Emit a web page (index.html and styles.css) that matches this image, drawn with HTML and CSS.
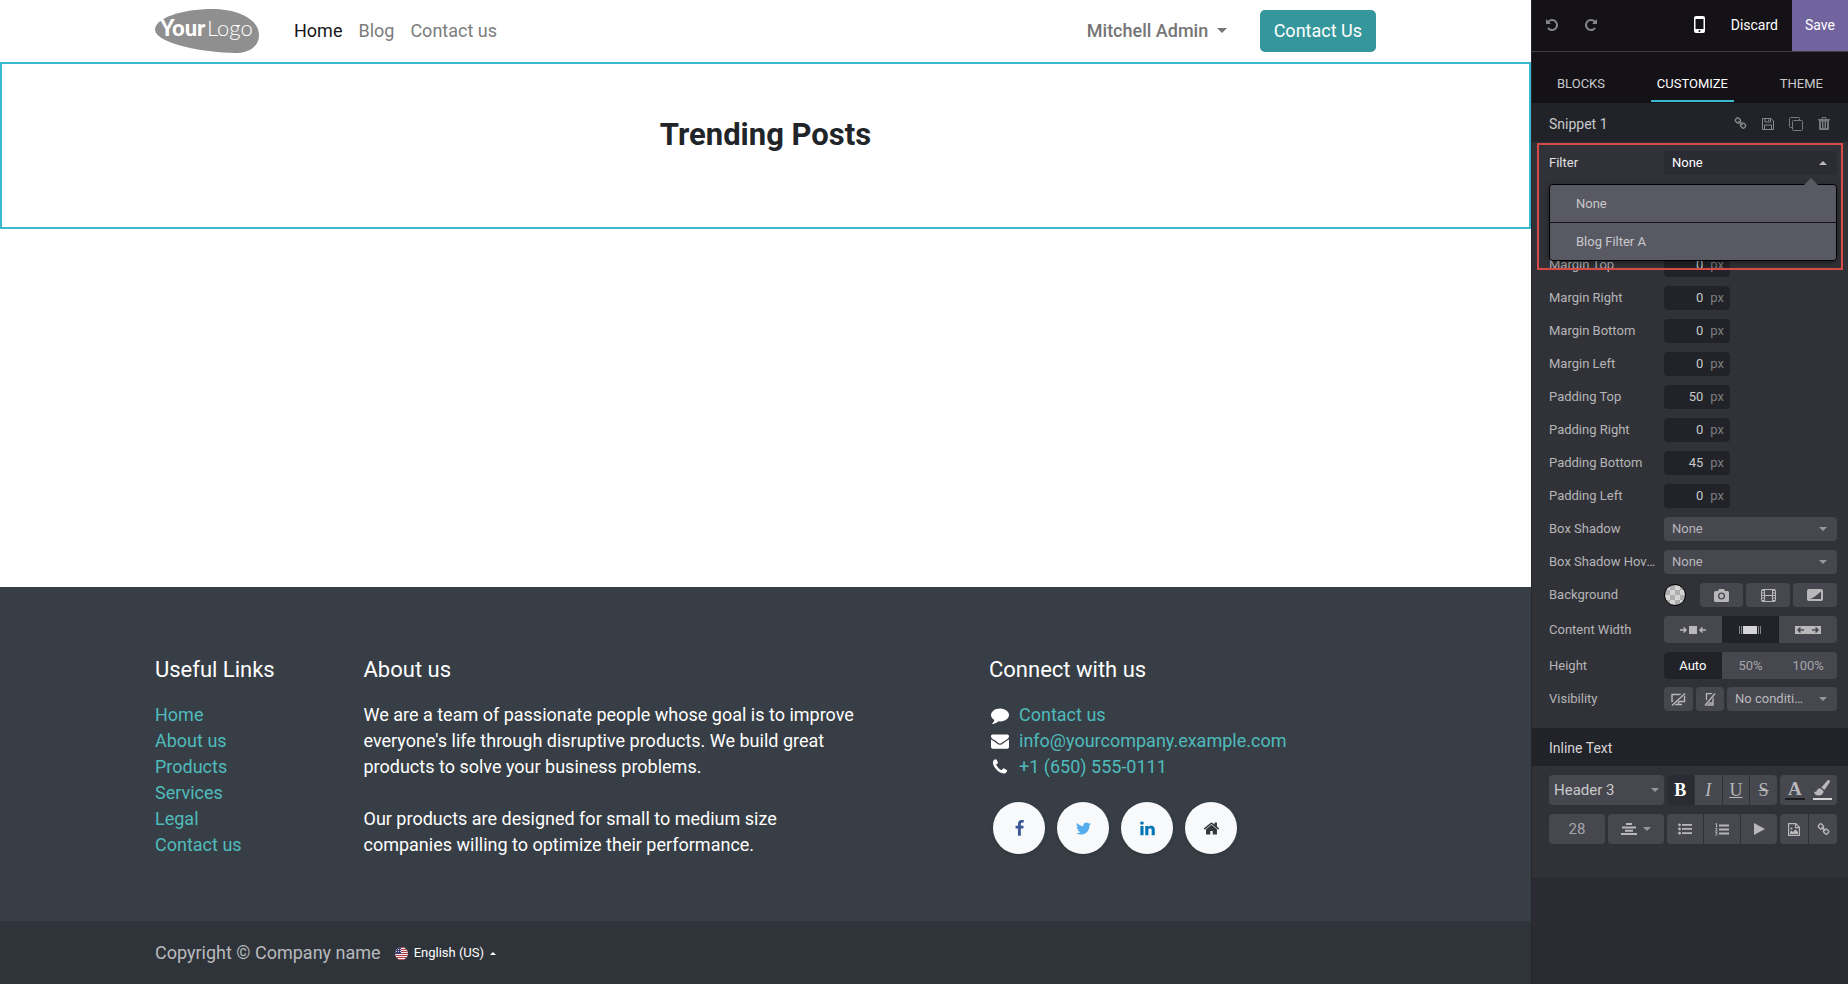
FILE: index.html
```html
<!DOCTYPE html>
<html lang="en">
<head>
<meta charset="utf-8">
<title>Home | Website Editor</title>
<link rel="stylesheet" href="styles.css">
</head>
<body>
<svg class="defs" aria-hidden="true">
  <symbol id="i-undo" viewBox="0 0 1792 1792"><path d="M1664 896q0 156-61 298t-164 245-245 164-298 61q-172 0-327-72.500t-264-204.500q-7-10-6.500-22.500t8.500-20.500l137-138q10-9 25-9 16 2 23 12 73 95 179 147t225 52q104 0 198.500-40.500t163.500-109.500 109.500-163.500 40.500-198.500-40.500-198.500-109.500-163.500-163.500-109.500-198.500-40.500q-98 0-188 35.500t-160 101.500l137 138q31 30 14 69-17 40-59 40h-448q-26 0-45-19t-19-45v-448q0-42 40-59 39-17 69 14l130 129q107-101 244.500-156.500t284.500-55.500q156 0 298 61t245 164 164 245 61 298z"/></symbol>
  <symbol id="i-link" viewBox="0 0 1792 1792"><path d="M1520 1216q0-40-28-68l-208-208q-28-28-68-28-42 0-72 32 3 3 19 18.500t21.500 21.500 15 19 13 25.500 3.500 27.500q0 40-28 68t-68 28q-15 0-27.500-3.500t-25.500-13-19-15-21.500-21.500-18.500-19q-33 31-33 73 0 40 28 68l206 207q27 27 68 27 40 0 68-26l147-146q28-28 28-67zm-703-705q0-40-28-68l-206-207q-28-28-68-28-39 0-68 27l-147 146q-28 28-28 67 0 40 28 68l208 208q27 27 68 27 42 0 72-31-3-3-19-18.500t-21.500-21.500-15-19-13-25.500-3.500-27.500q0-40 28-68t68-28q15 0 27.500 3.500t25.500 13 19 15 21.500 21.500 18.500 19q33-31 33-73zm895 705q0 120-85 203l-147 146q-83 83-203 83-121 0-204-85l-206-207q-83-83-83-203 0-123 88-209l-88-88q-86 88-208 88-120 0-204-84l-208-208q-84-84-84-204t85-203l147-146q83-83 203-83 121 0 204 85l206 207q83 83 83 203 0 123-88 209l88 88q86-88 208-88 120 0 204 84l208 208q84 84 84 204z"/></symbol>
  <symbol id="i-facebook" viewBox="0 0 1792 1792"><path d="M1343 12v264h-157q-86 0-116 36t-30 108v189h293l-39 296h-254v759h-306v-759h-255v-296h255v-218q0-186 104-288.500t277-102.500q147 0 228 12z"/></symbol>
  <symbol id="i-twitter" viewBox="0 0 1792 1792"><path d="M1684 408q-67 98-162 167 1 14 1 42 0 130-38 259.500t-115.500 248.500-184.500 210.500-258 146-323 54.500q-271 0-496-145 35 4 78 4 225 0 401-138-105-2-188-64.500t-114-159.500q33 5 61 5 43 0 85-11-112-23-185.500-111.500t-73.500-205.500v-4q68 38 146 41-66-44-105-115t-39-154q0-88 44-163 121 149 294.500 238.500t371.500 99.500q-8-38-8-74 0-134 94.500-228.500t228.500-94.500q140 0 236 102 109-21 205-78-37 115-142 178 93-10 186-50z"/></symbol>
  <symbol id="i-linkedin" viewBox="0 0 1792 1792"><path d="M477 625v991h-330v-991h330zm21-306q1 73-50.500 122t-135.500 49h-2q-82 0-132-49t-50-122q0-74 51.500-122.500t134.500-48.500 133 48.500 51 122.500zm1166 729v568h-329v-530q0-105-40.500-164.500t-126.500-59.500q-63 0-105.500 34.500t-63.500 85.500q-11 30-11 81v553h-329q2-399 2-647t-1-296l-1-48h329v144h-2q20-32 41-56t56.500-52 87-43.500 114.500-15.500q171 0 275 113.500t104 332.500z"/></symbol>
  <symbol id="i-home" viewBox="0 0 1792 1792"><path d="M1472 992v480q0 26-19 45t-45 19h-384v-384h-256v384h-384q-26 0-45-19t-19-45v-480q0-1 .5-3t.5-3l575-474 575 474q1 2 1 6zm223-69l-62 74q-8 9-21 11h-3q-13 0-21-7l-692-577-692 577q-12 8-24 7-13-2-21-11l-62-74q-8-10-7-23.500t11-21.500l719-599q32-26 76-26t76 26l244 204v-195q0-14 9-23t23-9h192q14 0 23 9t9 23v408l219 182q10 8 11 21.500t-7 23.500z"/></symbol>
  <symbol id="i-comment" viewBox="0 0 1792 1792"><path d="M1792 896q0 174-120 321.500t-326 233-450 85.500q-70 0-145-8-198 175-460 242-49 14-114 22-17 2-30.500-9t-17.500-29v-1q-3-4-.5-12t2-10 4.500-9.500l6-9 7-8.500 8-9q7-8 31-34.500t34.500-38 31-39.500 32.500-51 27-59 26-76q-157-89-247.500-220t-90.500-281q0-130 71-248.500t191-204.500 286-136.500 348-50.500q244 0 450 85.500t326 233 120 321.500z"/></symbol>
  <symbol id="i-envelope" viewBox="0 0 1792 1792"><path d="M1792 710v794q0 66-47 113t-113 47h-1472q-66 0-113-47t-47-113v-794q44 49 101 87 362 246 497 345 57 42 92.500 65.500t94.500 48 110 24.500h2q51 0 110-24.500t94.500-48 92.500-65.500q170-123 498-345 57-39 100-87zm0-294q0 79-49 151t-122 123q-376 261-468 325-10 7-42.500 31t-54 38.500-52 32.500-57.500 27-50 9h-2q-23 0-50-9t-57.500-27-52-32.500-54-38.500-42.500-31q-91-64-262-182.500t-205-142.500q-62-42-117-115.500t-55-136.500q0-78 41.500-130t118.500-52h1472q65 0 112.500 47t47.500 113z"/></symbol>
  <symbol id="i-phone" viewBox="0 0 1792 1792"><path d="M1600 1240q0 27-10 70.500t-21 68.500q-21 50-122 106-94 51-186 51-27 0-53-3.500t-57.500-12.500-47-14.500-55.500-20.500-49-18q-98-35-175-83-127-79-264-216t-216-264q-48-77-83-175-3-9-18-49t-20.500-55.500-14.500-47-12.500-57.500-3.500-53q0-92 51-186 56-101 106-122 25-11 68.500-21t70.500-10q14 0 21 3 18 6 53 76 11 19 30 54t35 63.500 31 53.500q3 4 17.500 25t21.500 35.500 7 28.500q0 20-28.500 50t-62 55-62 53-28.500 46q0 9 5 22.500t8.500 20.500 14 24 11.500 19q76 137 174 235t235 174q2 1 19 11.500t24 14 20.500 8.500 22.500 5q18 0 46-28.500t53-62 55-62 50-28.500q14 0 28.500 7t35.500 21.500 25 17.500q25 15 53.500 31t63.500 35 54 30q70 35 76 53 3 7 3 21z"/></symbol>
</svg>

<div class="editor">
  <div class="site">
    <header class="site-header">
      <div class="container header-bar">
        <a class="logo" href="#" aria-label="YourLogo">
          <svg width="105" height="45" viewBox="0 0 105 45">
            <path fill="#8f8f8f" d="M0 20C1 9 27 0 57 0c27 0 47 11 47 26 0 11-9 18-24 18C52 44-1 35 0 20z"/>
            <text x="5" y="27" class="logo-bold">Your</text>
            <text x="52" y="27" class="logo-light">Logo</text>
          </svg>
        </a>
        <nav class="nav">
          <a class="active" href="#">Home</a>
          <a href="#">Blog</a>
          <a href="#">Contact us</a>
        </nav>
        <button class="user" type="button">Mitchell Admin <span class="caret caret-nav"></span></button>
        <a class="cta" href="#">Contact Us</a>
      </div>
    </header>

    <main class="site-main">
      <section class="snippet"><h3>Trending Posts</h3></section>
    </main>

    <footer class="site-footer">
      <div class="container footer-grid">
        <div>
          <h5>Useful Links</h5>
          <ul>
            <li><a href="#">Home</a></li>
            <li><a href="#">About us</a></li>
            <li><a href="#">Products</a></li>
            <li><a href="#">Services</a></li>
            <li><a href="#">Legal</a></li>
            <li><a href="#">Contact us</a></li>
          </ul>
        </div>
        <div class="about">
          <h5>About us</h5>
          <p>We are a team of passionate people whose goal is to improve everyone's life through disruptive products. We build great products to solve your business problems.</p>
          <p>Our products are designed for small to medium size companies willing to optimize their performance.</p>
        </div>
        <div class="connect">
          <h5>Connect with us</h5>
          <ul>
            <li><svg class="fa"><use href="#i-comment"/></svg><a href="#">Contact us</a></li>
            <li><svg class="fa"><use href="#i-envelope"/></svg><a href="#">info@yourcompany.example.com</a></li>
            <li><svg class="fa"><use href="#i-phone"/></svg><a href="#">+1 (650) 555-0111</a></li>
          </ul>
          <div class="social">
            <a class="facebook" href="#" aria-label="Facebook"><svg><use href="#i-facebook"/></svg></a>
            <a class="twitter" href="#" aria-label="Twitter"><svg><use href="#i-twitter"/></svg></a>
            <a class="linkedin" href="#" aria-label="LinkedIn"><svg><use href="#i-linkedin"/></svg></a>
            <a class="homepage" href="#" aria-label="Home"><svg><use href="#i-home"/></svg></a>
          </div>
        </div>
      </div>
    </footer>
    <div class="copyright">
      <div class="container copyright-bar">
        <span>Copyright © Company name</span>
        <button class="language" type="button">
          <svg width="13" height="13" viewBox="0 0 13 13">
            <defs><clipPath id="round"><circle cx="6.500" cy="6.500" r="6.500"/></clipPath></defs>
            <g clip-path="url(#round)">
              <rect width="13" height="13" fill="#f3eeee"/>
              <path stroke="#b23a44" d="M0 .5h13M0 2.500h13M0 4.500h13M0 6.500h13M0 8.500h13M0 10.500h13M0 12.500h13"/>
              <rect width="6" height="7" fill="#39406f"/>
              <path stroke="#c9cce0" stroke-dasharray="1 1" d="M1 2.500h5M1 4.500h5"/>
            </g>
          </svg>
          English (US) <span class="caret caret-lang"></span>
        </button>
      </div>
    </div>
  </div>

  <aside class="sidebar">
    <div class="topbar">
      <button class="icon-btn dim" type="button" aria-label="Undo"><svg width="14" height="14"><use href="#i-undo"/></svg></button>
      <button class="icon-btn dim redo" type="button" aria-label="Redo"><svg width="14" height="14" viewBox="0 0 14 14"><g transform="matrix(-1 0 0 1 14 0)"><use href="#i-undo" width="14" height="14"/></g></svg></button>
      <button class="icon-btn mobile" type="button" aria-label="Mobile preview"><svg width="11" height="17" viewBox="0 0 11 17"><path fill="#fff" fill-rule="evenodd" d="M2 0h7a2 2 0 0 1 2 2v13a2 2 0 0 1-2 2H2a2 2 0 0 1-2-2V2a2 2 0 0 1 2-2zm-.5 3v10h8V3zm4 11a1 1 0 1 0 0 2 1 1 0 0 0 0-2z"/></svg></button>
      <button class="discard" type="button">Discard</button>
      <button class="save" type="button">Save</button>
    </div>
    <div class="tabs">
      <button type="button">BLOCKS</button>
      <button class="active" type="button">CUSTOMIZE</button>
      <button type="button">THEME</button>
    </div>

    <div class="panel-title">
      <span>Snippet 1</span>
      <div class="panel-actions">
        <button type="button" aria-label="Copy link"><svg width="13" height="13"><use href="#i-link"/></svg></button>
        <button type="button" aria-label="Save block"><svg width="12" height="12" viewBox="0 0 12 12" fill="none" stroke="#88898c"><path d="M.5.5h8.500l2.500 2.500v8.500H.5zM3 .5v3.500h5.500V.5M2.500 11.500V7h7v4.500M6.500 1.500v1.500"/></svg></button>
        <button type="button" aria-label="Duplicate"><svg width="14" height="14" viewBox="0 0 14 14" fill="none" stroke="#77787b"><path d="M4.500 3.500h8a1 1 0 0 1 1 1v8a1 1 0 0 1-1 1h-8a1 1 0 0 1-1-1v-8a1 1 0 0 1 1-1zM10.500 3V1.500a1 1 0 0 0-1-1h-8a1 1 0 0 0-1 1v8a1 1 0 0 0 1 1H3"/></svg></button>
        <button type="button" aria-label="Remove"><svg width="12" height="13" viewBox="0 0 12 13"><path fill="#77787b" fill-rule="evenodd" d="M4 0h4l.8 2H12v1.200h-1V12a1 1 0 0 1-1 1H2a1 1 0 0 1-1-1V3.200H0V2h3.200zm.5 1l-.3 1h3.600l-.3-1zM3 4.500V11h1V4.500zm2.500 0V11h1V4.500zM8 4.500V11h1V4.500z"/></svg></button>
      </div>
    </div>

    <div class="options">
      <div class="filter">
        <div class="row">
          <span class="label" id="filter-label">Filter</span>
          <button class="toggle" type="button" aria-expanded="true" aria-labelledby="filter-label">None<span class="caret caret-up"></span></button>
        </div>
        <div class="menu">
          <button type="button">None</button>
          <button type="button">Blog Filter A</button>
        </div>
        <div class="highlight"></div>
      </div>

      <div class="row"><label for="mt">Margin Top</label><div class="num"><input id="mt" type="text" value="0"><span>px</span></div></div>
      <div class="row"><label for="mr">Margin Right</label><div class="num"><input id="mr" type="text" value="0"><span>px</span></div></div>
      <div class="row"><label for="mb">Margin Bottom</label><div class="num"><input id="mb" type="text" value="0"><span>px</span></div></div>
      <div class="row"><label for="ml">Margin Left</label><div class="num"><input id="ml" type="text" value="0"><span>px</span></div></div>
      <div class="row"><label for="pt">Padding Top</label><div class="num"><input id="pt" type="text" value="50"><span>px</span></div></div>
      <div class="row"><label for="pr">Padding Right</label><div class="num"><input id="pr" type="text" value="0"><span>px</span></div></div>
      <div class="row"><label for="pb">Padding Bottom</label><div class="num"><input id="pb" type="text" value="45"><span>px</span></div></div>
      <div class="row"><label for="pl">Padding Left</label><div class="num"><input id="pl" type="text" value="0"><span>px</span></div></div>
      <div class="row"><label for="bs">Box Shadow</label><div class="select"><select id="bs"><option>None</option></select><span class="caret"></span></div></div>
      <div class="row"><label for="bsh">Box Shadow Hover</label><div class="select"><select id="bsh"><option>None</option></select><span class="caret"></span></div></div>

      <div class="row">
        <span class="label">Background</span>
        <div class="background">
          <button class="swatch" type="button" aria-label="Background colour"></button>
          <button class="btn" type="button" aria-label="Image"><svg width="15" height="13" viewBox="0 0 15 13"><path fill="#b8b8bb" fill-rule="evenodd" d="M5 0h5l1 2h2.500A1.500 1.500 0 0 1 15 3.500v8a1.500 1.500 0 0 1-1.500 1.500h-12A1.500 1.500 0 0 1 0 11.500v-8A1.500 1.500 0 0 1 1.500 2H4zm2.500 3.500a3.500 3.500 0 1 0 0 7 3.500 3.500 0 0 0 0-7zm0 1.300a2.200 2.200 0 1 1 0 4.400 2.200 2.200 0 0 1 0-4.400z"/></svg></button>
          <button class="btn" type="button" aria-label="Video"><svg width="15" height="13" viewBox="0 0 15 13" fill="none" stroke="#b8b8bb"><rect x=".5" y=".5" width="14" height="12" rx="1"/><path d="M3.500 0v13M11.500 0v13M4 6.500h7"/><path d="M2 1v11M13 1v11" stroke-width="2" stroke-dasharray="1 1.500"/></svg></button>
          <button class="btn" type="button" aria-label="Shape"><svg width="16" height="12" viewBox="0 0 16 12"><rect width="16" height="12" rx="2" fill="#b8b8bb"/><path fill="#474750" d="M2 10C5 10 9 7 14 2.500V10z"/></svg></button>
        </div>
      </div>
      <div class="row">
        <span class="label">Content Width</span>
        <div class="segmented">
          <button type="button" aria-label="Small"><svg width="26" height="10" viewBox="0 0 26 10"><rect x="9" y="1" width="8" height="8" fill="#b8b8bb"/><path fill="none" stroke="#b8b8bb" stroke-width="1.500" d="M0 5h5.500M3.500 2.500L6 5 3.500 7.500M26 5h-5.500M22.500 2.500L20 5l2.500 2.500"/></svg></button>
          <button class="active" type="button" aria-label="Regular"><svg width="22" height="10" viewBox="0 0 22 10"><rect x="4" y="1" width="14" height="8" fill="#d6d6d8"/><path stroke="#85868a" d="M.5 1v8M2.500 1v8M19.500 1v8M21.500 1v8"/></svg></button>
          <button type="button" aria-label="Full"><svg width="26" height="10" viewBox="0 0 26 10"><rect y="1" width="26" height="8" fill="#b8b8bb"/><path fill="none" stroke="#474750" stroke-width="1.500" d="M3 5h6M5.500 2.500L3 5l2.500 2.500M23 5h-6M20.500 2.500L23 5l-2.500 2.500"/></svg></button>
        </div>
      </div>
      <div class="row">
        <span class="label">Height</span>
        <div class="segmented">
          <button class="active" type="button">Auto</button>
          <button type="button">50%</button>
          <button type="button">100%</button>
        </div>
      </div>
      <div class="row visibility-row">
        <label for="vis">Visibility</label>
        <div class="visibility">
          <button class="btn" type="button" aria-label="Hide on desktop"><svg width="15" height="13" viewBox="0 0 15 13" fill="none" stroke="#b8b8bb"><path d="M1 1.500h12.500v7H1zM4 11.500h7M7.500 9v2" stroke-width="1.400"/><path d="M0 12.500L14 0" stroke="#474750" stroke-width="3.500"/><path d="M1 12.500L14 .5" stroke-width="1.400"/></svg></button>
          <button class="btn" type="button" aria-label="Hide on mobile"><svg width="12" height="13" viewBox="0 0 12 13" fill="none" stroke="#b8b8bb"><path d="M2.500.7h6.500v11.300H2.500zM2.500 10h6.500" stroke-width="1.300"/><path d="M0 12.500L11 0" stroke="#474750" stroke-width="3.500"/><path d="M1 12.500L11 .5" stroke-width="1.300"/></svg></button>
          <div class="select"><select id="vis"><option>No condition</option></select><span class="caret"></span></div>
        </div>
      </div>
    </div>

    <div class="panel-title inline-title"><span>Inline Text</span></div>
    <div class="text-tools">
      <div class="tool-row row-one">
        <div class="select style-select"><select aria-label="Text style"><option>Header 3</option></select><span class="caret"></span></div>
        <div class="group format">
          <button class="bold" type="button">B</button>
          <button class="italic" type="button">I</button>
          <button class="underline" type="button">U</button>
          <button class="strike" type="button">S</button>
        </div>
        <div class="group colors">
          <button class="fore" type="button">A</button>
          <button class="back" type="button" aria-label="Highlight"><svg width="16" height="16" viewBox="0 0 16 16"><path fill="#b8b8bb" d="M15.600.4c.6.6.4 1.500 0 2.200L10.500 10 7.300 7.500 13.400.6c.6-.6 1.600-.8 2.200-.2zM6.500 8.400l3 2.500c.2 2.600-1.700 4.700-4.900 4.700C1.700 15.600.2 14 0 11.300c1.200.9 2 .8 2.600-.3.800-1.700 2.100-2.900 3.900-2.600z"/></svg></button>
        </div>
      </div>
      <div class="tool-row row-two">
        <input class="size" type="text" value="28" aria-label="Font size">
        <button class="align" type="button" aria-label="Align"><svg width="16" height="12" viewBox="0 0 16 12" stroke="#b8b8bb" stroke-width="2"><path d="M5 1h6M1 4.500h14M4 7.700h8M0 11h16"/></svg><span class="caret"></span></button>
        <div class="group lists">
          <button type="button" aria-label="Bulleted list"><svg width="14" height="12" viewBox="0 0 14 12" fill="#b8b8bb"><circle cx="1.500" cy="1.800" r="1.400"/><circle cx="1.500" cy="6" r="1.400"/><circle cx="1.500" cy="10.200" r="1.400"/><path d="M4 1h10v1.800H4zM4 5h10v1.800H4zM4 9.200h10V11H4z"/></svg></button>
          <button type="button" aria-label="Numbered list"><svg width="14" height="13" viewBox="0 0 14 13" fill="none" stroke="#b8b8bb"><path d="M.5 1L1.600.5V4M.3 5.200h1.500v1L.5 8h2M.3 9.300h1.700l-.8 1.200c1.500 0 1.200 2-.9 1.700"/><path d="M4 2.500h10M4 6.500h10M4 10.500h10" stroke-width="1.800"/></svg></button>
          <button type="button" aria-label="Media"><svg width="11" height="12" viewBox="0 0 11 12"><path fill="#b8b8bb" d="M0 0l11 6-11 6z"/></svg></button>
        </div>
        <div class="group inserts">
          <button type="button" aria-label="Image"><svg width="12" height="13" viewBox="0 0 12 13"><path fill="none" stroke="#b8b8bb" stroke-width="1.200" d="M.6.6h7.200l3.600 3.600v8.200H.6zM7.500.6v4h4"/><path fill="#b8b8bb" d="M2 11V9l1.500-1.500L5 9l2.500-2.800L10 9v2z"/><circle cx="3.500" cy="5.500" r="1.100" fill="#b8b8bb"/></svg></button>
          <button type="button" aria-label="Link"><svg width="13" height="13"><use href="#i-link"/></svg></button>
        </div>
      </div>
    </div>
  </aside>
</div>
</body>
</html>
```
FILE: styles.css
```css
* { box-sizing: border-box; }
body { margin: 0; font-family: Roboto, "Liberation Sans", sans-serif; font-size: 18px; line-height: 26px; color: #212529; background: #fff; }
button, input, select { font: inherit; color: inherit; margin: 0; padding: 0; border: 0; background: none; }
button, select { cursor: pointer; }
a { text-decoration: none; }
ul { list-style: none; margin: 0; padding: 0; }
svg { display: block; flex: none; }
svg:not([fill]) { fill: currentColor; }
.defs { display: none; }

.editor { display: grid; grid-template-columns: minmax(0, 1fr) 317px; min-height: 100vh; }
.site { display: flex; flex-direction: column; }
.container { width: 100%; max-width: 1251px; margin: 0 auto; padding: 0 15px; }

.caret { flex: none; border: 4px solid transparent; border-top-color: #97989b; border-bottom: 0; }
.caret-nav { display: inline-block; border-width: 5px; border-bottom: 0; border-top-color: currentColor; margin-left: 4px; vertical-align: 4px; }
.caret-lang { border: 3px solid transparent; border-bottom-color: #fff; border-top: 0; }
.caret-up { border: 4px solid transparent; border-bottom-color: #b8b8bb; border-top: 0; }

/* Site header */
.site-header { padding: 8px 0; }
.header-bar { display: flex; align-items: center; height: 46px; }
.logo-bold { font: 900 22px Lato, sans-serif; fill: #fff; }
.logo-light { font: 300 22px Lato, sans-serif; fill: #fff; }
.nav { display: flex; gap: 16px; margin-left: 34px; }
.nav a { color: #7c7c7c; }
.nav a.active { color: #161616; }
.user { margin-left: auto; color: #757575; font-weight: 500; }
.cta { margin-left: 33px; padding: 8px 14px; border-radius: 5px; background: #35979c; color: #fff; }

.site-main { flex: 1; }
.snippet { border: 2px solid #3cb8d0; padding: 52px 0 73px; text-align: center; }
.snippet h3 { margin: 0; font-size: 31px; line-height: 38px; font-weight: 700; }

/* Site footer */
.site-footer { background: #383e45; color: #fff; padding: 68px 0 63px; }
.footer-grid { display: grid; grid-template-columns: 2fr 5fr 1fr 4fr; padding: 0; }
.footer-grid > div { padding: 0 15px; }
.site-footer h5 { margin: 0 0 17px; font-size: 22px; line-height: 30px; font-weight: 400; }
.site-footer li a { color: #4fbbbd; }
.about p { margin: 0 0 26px; }
.about p:last-child { margin-bottom: 0; }
.footer-grid .connect { grid-column: 4; }
.connect li { display: flex; align-items: center; gap: 10px; padding-left: 2px; }
.fa { width: 18px; height: 18px; }
.social { display: flex; gap: 12px; margin: 22px 0 0 4px; }
.social a { display: grid; place-items: center; width: 52px; height: 52px; border-radius: 50%; background: #f8f9fb; box-shadow: 0 2px 4px rgba(0, 0, 0, .1); }
.social svg { width: 17px; height: 17px; }
.facebook { color: #3b5998; }
.twitter { color: #55acee; }
.linkedin { color: #0077b5; }
.homepage { color: #33383e; }
.copyright { background: #2f343b; color: #b8babd; padding: 19px 0 18px; }
.copyright-bar { display: flex; align-items: center; gap: 14px; }
.language { display: flex; align-items: center; gap: 6px; color: #fff; font-size: 13px; }

/* Editor sidebar */
.sidebar { border-left: 1px solid #26272e; background: #2b2b33; color: #b5b5b8; font-size: 13px; line-height: 18px; }
.topbar { display: flex; align-items: stretch; height: 52px; background: #141217; border-bottom: 1px solid #3e3e43; }
.topbar button { padding-bottom: 2px; }
.icon-btn { display: grid; place-items: center; width: 39px; }
.dim { color: #85868a; }
.mobile { width: 42px; margin-left: auto; }
.topbar .discard { padding: 0 14px 2px 10px; color: #fff; font-size: 14px; }
.save { width: 56px; background: #71639e; color: #fff; font-size: 14px; }
.tabs { display: flex; justify-content: space-between; height: 51px; padding: 0 19px 1px; background: #141217; }
.tabs button { padding: 16px 6px 0; border-bottom: 2px solid transparent; color: #c9c9cb; }
.tabs .active { color: #fff; border-color: #3cb8d0; }
.panel-title { display: flex; align-items: center; justify-content: space-between; height: 39px; padding: 2px 17px 0; background: #222328; color: #c9c9cb; font-size: 14px; }
.inline-title { height: 38px; color: #d4d4d6; }
.panel-actions { display: flex; gap: 14px; color: #88898c; }
.panel-actions button { display: grid; place-items: center; width: 14px; }
.options { display: grid; gap: 9px; padding: 9px 11px 17px 17px; background: #313237; }
.row { display: grid; grid-template-columns: 115px minmax(0, 1fr); align-items: center; min-height: 24px; }
.row > label, .label { overflow: hidden; white-space: nowrap; text-overflow: ellipsis; padding-right: 7px; }
.filter { position: relative; min-height: 93px; }
.filter .label { color: #e0e0e2; }
.toggle { display: flex; align-items: center; justify-content: space-between; height: 24px; padding: 0 10px 0 8px; border-radius: 4px; background: #2b2b33; color: #fff; }
.menu { position: absolute; z-index: 2; top: 33px; left: 0; right: 0; display: grid; gap: 1px; border: 1px solid #000; border-radius: 4px; background: #141217; box-shadow: 0 2px 6px rgba(0, 0, 0, .4); }
.menu::before { content: ""; position: absolute; right: 18px; bottom: 100%; border: 7px solid transparent; border-top: 0; border-bottom-color: #595964; }
.menu button { height: 37px; padding: 0 26px; background: #595964; color: #c9c9cb; text-align: left; }
.menu button:first-child { border-radius: 3px 3px 0 0; }
.menu button:last-child { border-radius: 0 0 3px 3px; }
.highlight { position: absolute; z-index: 3; top: -8px; left: -12px; right: -6px; height: 127px; border: 2px solid #d84a48; pointer-events: none; }
.num { display: flex; align-items: center; gap: 7px; width: 66px; height: 24px; padding: 0 6px; border-radius: 4px; background: #222328; color: #7c7d80; }
.num input { flex: 1; width: 0; color: #c9c9cb; text-align: right; }
.select { display: grid; align-items: center; height: 24px; min-width: 0; border-radius: 4px; background: #474750; color: #b8b8bb; }
.select select { grid-area: 1 / 1; width: 100%; height: 100%; padding: 0 30px 0 8px; appearance: none; overflow: hidden; text-overflow: ellipsis; white-space: nowrap; }
.select .caret { grid-area: 1 / 1; justify-self: end; margin-right: 10px; pointer-events: none; }
.background { display: grid; grid-template-columns: 22px 54px 1fr 1fr; column-gap: 3px; align-items: center; }
.btn { display: grid; place-items: center; height: 24px; border-radius: 4px; background: #474750; }
.swatch { width: 22px; height: 22px; border: 1px solid #000; border-radius: 50%; background: repeating-conic-gradient(#adadad 0 25%, #d4d4d4 0 50%) 0 0 / 10px 10px; }
.swatch + .btn { margin-left: 11px; }
.segmented { display: grid; grid-template-columns: repeat(3, 1fr); height: 27px; border-radius: 4px; overflow: hidden; background: #474750; color: #a5a5a9; }
.segmented button { display: grid; place-items: center; }
.segmented .active { background: #222328; color: #fff; }
.visibility-row { margin-top: -1px; }
.visibility { display: grid; grid-template-columns: 29px 28px minmax(0, 1fr); gap: 3px; }
.visibility .select select { padding-right: 32px; }

.text-tools { display: grid; gap: 9px; padding: 9px 11px 34px 17px; background: #313237; }
.tool-row { display: grid; grid-template-columns: 115px 110px minmax(0, 1fr); column-gap: 3px; }
.row-two { grid-template-columns: 56px 56px 110px minmax(0, 1fr); column-gap: 3px; }
.style-select { height: 30px; color: #c9c9cb; font-size: 15px; }
.style-select select { padding: 0 20px 0 5px; }
.style-select .caret { margin-right: 5px; }
.group { display: grid; grid-auto-flow: column; grid-auto-columns: 1fr; gap: 1px; height: 30px; border-radius: 4px; overflow: hidden; }
.group button { display: grid; place-items: center; background: #474750; color: #b8b8bb; }
.format { font: 18px "Liberation Serif", serif; }
.format .bold { background: #2b2b33; color: #fff; font-weight: 700; }
.italic { font-style: italic; }
.underline { text-decoration: underline; }
.strike { text-decoration: line-through; }
.colors { gap: 0; background: #474750; padding: 0 5px; column-gap: 8px; }
.colors button { align-content: start; height: 25px; padding-top: 5px; border-bottom: 2px solid #1c1c20; }
.colors .fore { font: 700 19px/17px "Liberation Serif", serif; }
.colors .back { border-color: #d4d4d6; }
.size, .align { height: 30px; border-radius: 4px; background: #474750; }
.size { width: 100%; text-align: center; font-size: 15px; color: #a5a5a9; }
.align { display: flex; align-items: center; justify-content: center; gap: 6px; }
```
